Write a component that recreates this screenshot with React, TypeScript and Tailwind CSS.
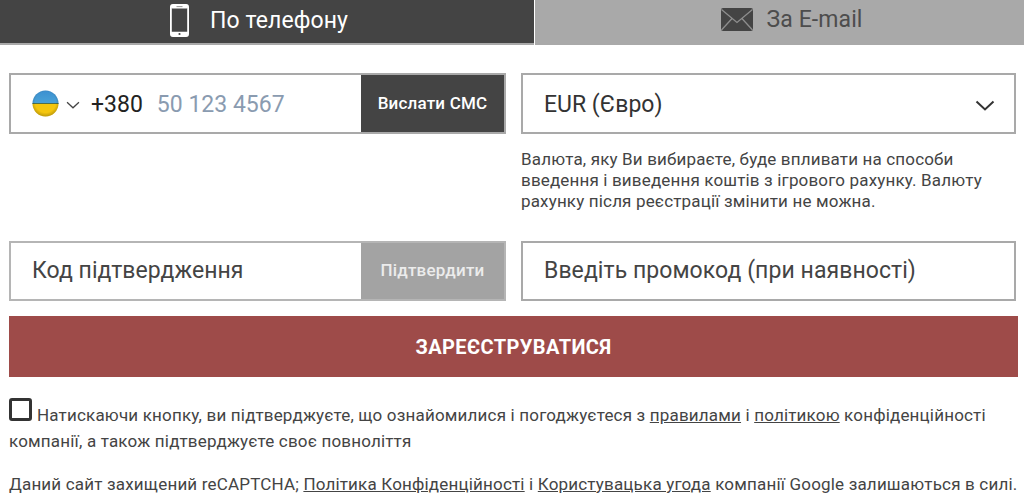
import React from "react";

const Phone = () => (
  <svg width="19" height="33" viewBox="0 0 19 33" className="shrink-0">
    <rect x="0.9" y="0.9" width="17.2" height="31.2" rx="2" fill="none" stroke="#fff" strokeWidth="1.8" />
    <rect x="1" y="1" width="17" height="3.4" rx="1.5" fill="#fff" />
    <path d="M1 27.8h17V30a2 2 0 0 1-2 2H3a2 2 0 0 1-2-2z" fill="#fff" />
    <circle cx="9.5" cy="30" r="1.1" fill="#444" />
    <rect x="6.5" y="2.2" width="6" height="0.9" fill="#888" />
  </svg>
);

const Mail = () => (
  <svg width="32" height="23" viewBox="0 0 32 23" className="shrink-0 mb-[1px]">
    <rect width="32" height="23" rx="2" fill="#444" />
    <path d="M0.5 1.5 16 14.5 31.5 1.5M0.5 22 11.5 10M31.5 22 20.5 10" fill="none" stroke="#8e8e8e" strokeWidth="1.3" />
  </svg>
);

const Flag = () => (
  <svg width="27" height="27" viewBox="0 0 27 27" className="shrink-0">
    <defs>
      <clipPath id="c"><circle cx="13.5" cy="13.5" r="13" /></clipPath>
      <radialGradient id="s" cx="50%" cy="45%" r="55%">
        <stop offset="70%" stopColor="#000" stopOpacity="0" />
        <stop offset="100%" stopColor="#000" stopOpacity="0.25" />
      </radialGradient>
      <linearGradient id="b" x1="0" y1="0" x2="0" y2="1">
        <stop offset="0%" stopColor="#3b8fd0" />
        <stop offset="100%" stopColor="#4aa3d8" />
      </linearGradient>
    </defs>
    <g clipPath="url(#c)">
      <rect width="27" height="14" fill="url(#b)" />
      <rect y="14" width="27" height="13" fill="#f4c60e" />
      <path d="M0 13.5h27" stroke="#4f6f4a" strokeWidth="1" />
      <rect width="27" height="27" fill="url(#s)" />
    </g>
  </svg>
);

const Chevron = ({ w, h, sw, color }: { w: number; h: number; sw: number; color: string }) => (
  <svg width={w} height={h} viewBox="0 0 20 11" className="shrink-0">
    <path d="M1.5 1.5 10 9.5 18.5 1.5" fill="none" stroke={color} strokeWidth={sw} />
  </svg>
);

export default function App() {
  return (
    <div className="w-[1024px] h-[501px] overflow-hidden bg-white font-['Roboto',sans-serif] text-[#333]">
      <div className="flex h-[45px]">
        <div className="w-[534px] h-[45px] bg-[#444] border-b-2 border-[#a9a9a9] flex items-center justify-center gap-[21px] pr-[16px] pb-[3px]">
          <Phone />
          <span className="text-white text-[23px] leading-none tracking-[0.08px]">По телефону</span>
        </div>
        <div className="flex-1 ml-[1px] bg-[#a9a9a9] flex items-center justify-center gap-[13px] pl-[25px] pb-[6px]">
          <Mail />
          <span className="text-[#4d4d4d] text-[23px] leading-none tracking-[0.1px]">За E-mail</span>
        </div>
      </div>

      <div className="pl-[9px] pr-[6px] pt-[28px]">
        <div className="grid grid-cols-[497px_495px] gap-x-[15px]">
          <div className="h-[61px] border-2 border-[#a9a9a9] flex items-stretch">
            <div className="flex-1 flex items-center pl-[21px]">
              <Flag />
              <span className="ml-[7px] pt-[3px]"><Chevron w={14} h={8} sw={1.8} color="#444" /></span>
              <span className="ml-[11px] pt-[3px] text-[23px] text-[#222]">+380</span>
              <span className="ml-[14px] pt-[3px] text-[23px] text-[#8a9bb0]">50 123 4567</span>
            </div>
            <button className="w-[143px] bg-[#444] text-white text-[17px] tracking-[0.2px] font-medium">Вислати СМС</button>
          </div>
          <div className="h-[61px] border-2 border-[#a9a9a9] flex items-center justify-between pl-[21px] pr-[19px]">
            <span className="pt-[3px] text-[23px] text-[#333]">EUR (Євро)</span>
            <span className="pt-[3px]"><Chevron w={20} h={11} sw={2} color="#333" /></span>
          </div>

          <div className="h-[107px]" />
          <p className="pt-[15px] text-[17px] leading-[21px] text-[#444] tracking-[0.16px] whitespace-nowrap">
            Валюта, яку Ви вибираєте, буде впливати на способи
            <br />
            введення і виведення коштів з ігрового рахунку. Валюту
            <br />
            рахунку після реєстрації змінити не можна.
          </p>

          <div className="h-[60px] border-2 border-[#b5b5b5] flex items-stretch">
            <div className="flex-1 flex items-center pl-[21px] text-[23px] text-[#444] tracking-[0.05px]">Код підтвердження</div>
            <button className="w-[143px] bg-[#a3a3a3] text-[#ececec] text-[17px] tracking-[0.2px] font-medium">Підтвердити</button>
          </div>
          <div className="h-[60px] border-2 border-[#a9a9a9] flex items-center pl-[21px] text-[23px] text-[#444] tracking-[0.07px]">
            Введіть промокод (при наявності)
          </div>
        </div>

        <button className="block mt-[15px] w-[1009px] h-[61px] bg-[#9e4b49] text-white text-[20px] tracking-[0.4px] font-bold">
          ЗАРЕЄСТРУВАТИСЯ
        </button>

        <div className="mt-[25px] text-[17px] leading-[26px] text-[#444] tracking-[0.18px] whitespace-nowrap">
          <p>
            <span className="inline-block w-[23px] h-[23px] border-[3px] border-[#333] rounded-[3px] mr-[5px] align-[-2px] -mt-[6px] -translate-y-[2px]" />
            Натискаючи кнопку, ви підтверджуєте, що ознайомилися і погоджуєтеся з{" "}
            <a className="underline">правилами</a> і <a className="underline">політикою</a> конфіденційності
            <br />
            компанії, а також підтверджуєте своє повноліття
          </p>
          <p className="mt-[17px]">
            Даний сайт захищений reCAPTCHA; <a className="underline">Політика Конфіденційності</a> і{" "}
            <a className="underline">Користувацька угода</a> компанії Google залишаються в силі.
          </p>
        </div>
      </div>
    </div>
  );
}
